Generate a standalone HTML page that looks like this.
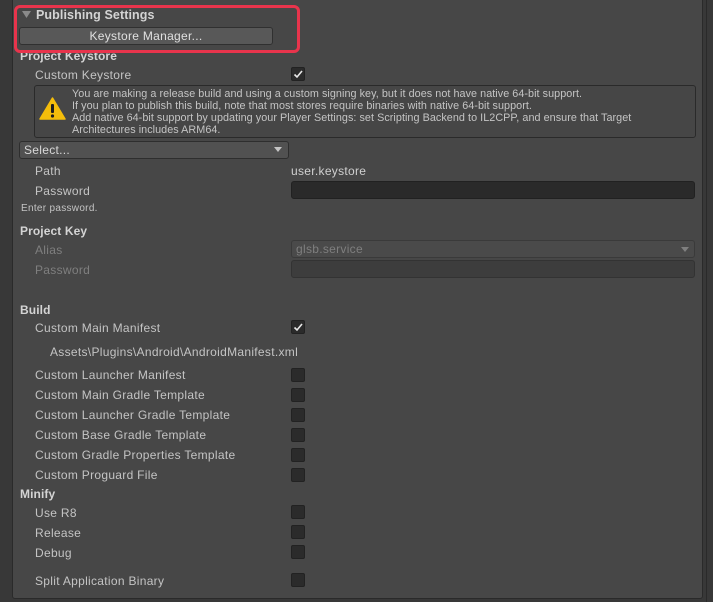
<!DOCTYPE html>
<html><head><meta charset="utf-8"><style>
*{margin:0;padding:0;box-sizing:border-box}
body{width:713px;height:602px;background:#383838;font-family:"Liberation Sans",sans-serif;font-size:12px;color:#c4c4c4;position:relative;overflow:hidden}
.frame{position:absolute;left:12px;top:-4px;width:691px;height:603px;background:#474747;border:1px solid #2a2a2a;border-radius:3px}
.rb{position:absolute;left:706px;top:0;width:1px;height:602px;background:#2a2a2a}
.t{position:absolute;white-space:nowrap;line-height:14px;letter-spacing:0.3px}
.b{font-weight:bold;color:#d4d4d4;letter-spacing:0.1px}
.cb{position:absolute;left:291px;width:14px;height:14px;background:#2b2b2b;border:1px solid #222;border-radius:2px}
.fld{position:absolute;left:291px;width:404px;height:18px;background:#2a2a2a;border:1px solid #212121;border-radius:3px}
.dis{color:#7f7f7f}
</style></head><body>
<div class="frame"></div>
<div class="rb"></div>
<svg style="position:absolute;left:22px;top:10px" width="10" height="9"><path d="M0 1 L9 1 L4.5 8 Z" fill="#8a8a8a"/></svg>
<div class="t b" style="left:36px;top:8px;font-size:12.5px">Publishing Settings</div>
<div style="position:absolute;left:19px;top:27px;width:254px;height:18px;background:#585858;border:1px solid #303030;border-radius:3px;text-align:center;line-height:16px;color:#e0e0e0;letter-spacing:0.3px">Keystore Manager...</div>
<div class="t b" style="left:20px;top:49px">Project Keystore</div>
<div style="position:absolute;left:14px;top:5px;width:286px;height:48px;border:3px solid #e8344c;border-radius:6px"></div>
<div class="t" style="left:35px;top:68px">Custom Keystore</div>
<div class="cb" style="top:67px"><svg width="12" height="12"><path d="M2.5 6.5 L5 9 L10 3" stroke="#e8e8e8" stroke-width="1.6" fill="none"/></svg></div>
<div style="position:absolute;left:34px;top:85px;width:662px;height:53px;border:1px solid #2a2a2a;border-radius:3px;background:#464646"></div>
<svg style="position:absolute;left:39px;top:97px" width="27" height="23"><path d="M13.5 1 L26 22 L1 22 Z" fill="#f4bd0b" stroke="#f4bd0b" stroke-linejoin="round" stroke-width="1.5"/><rect x="12" y="7" width="3" height="9" rx="1" fill="#1e1e1e"/><circle cx="13.5" cy="19" r="1.6" fill="#1e1e1e"/></svg>
<div class="t" style="left:72px;top:88px;font-size:10.8px;line-height:12px;letter-spacing:0.05px">You are making a release build and using a custom signing key, but it does not have native 64-bit support.<br>If you plan to publish this build, note that most stores require binaries with native 64-bit support.<br>Add native 64-bit support by updating your Player Settings: set Scripting Backend to IL2CPP, and ensure that Target<br>Architectures includes ARM64.</div>
<div style="position:absolute;left:19px;top:141px;width:270px;height:18px;background:#515151;border:1px solid #2e2e2e;border-radius:3px;padding-left:4px;line-height:16px;color:#d8d8d8;letter-spacing:0.3px">Select...</div>
<svg style="position:absolute;left:274px;top:147px" width="9" height="6"><path d="M0 0 L8 0 L4 5 Z" fill="#c4c4c4"/></svg>
<div class="t" style="left:35px;top:164px">Path</div>
<div class="t" style="left:291px;top:164px;color:#d0d0d0">user.keystore</div>
<div class="t" style="left:35px;top:184px">Password</div>
<div class="fld" style="top:181px"></div>
<div class="t" style="left:21px;top:202px;font-size:10px">Enter password.</div>
<div class="t b" style="left:20px;top:224px">Project Key</div>
<div class="t dis" style="left:35px;top:243px">Alias</div>
<div style="position:absolute;left:291px;top:240px;width:404px;height:18px;background:#4a4a4a;border:1px solid #3a3a3a;border-radius:3px;padding-left:4px;line-height:16px;color:#7f7f7f;letter-spacing:0.3px">glsb.service</div>
<svg style="position:absolute;left:681px;top:247px" width="9" height="6"><path d="M0 0 L8 0 L4 5 Z" fill="#7f7f7f"/></svg>
<div class="t dis" style="left:35px;top:263px">Password</div>
<div class="fld" style="top:260px;background:#3d3d3d;border-color:#333"></div>
<div class="t b" style="left:20px;top:303px">Build</div>
<div class="t" style="left:35px;top:321px">Custom Main Manifest</div>
<div class="cb" style="top:320px"><svg width="12" height="12"><path d="M2.5 6.5 L5 9 L10 3" stroke="#e8e8e8" stroke-width="1.6" fill="none"/></svg></div>
<div class="t" style="left:50px;top:345px">Assets\Plugins\Android\AndroidManifest.xml</div>
<div class="t" style="left:35px;top:368px">Custom Launcher Manifest</div><div class="cb" style="top:368px"></div>
<div class="t" style="left:35px;top:388px">Custom Main Gradle Template</div><div class="cb" style="top:388px"></div>
<div class="t" style="left:35px;top:408px">Custom Launcher Gradle Template</div><div class="cb" style="top:408px"></div>
<div class="t" style="left:35px;top:428px">Custom Base Gradle Template</div><div class="cb" style="top:428px"></div>
<div class="t" style="left:35px;top:448px">Custom Gradle Properties Template</div><div class="cb" style="top:448px"></div>
<div class="t" style="left:35px;top:468px">Custom Proguard File</div><div class="cb" style="top:468px"></div>
<div class="t b" style="left:20px;top:487px">Minify</div>
<div class="t" style="left:35px;top:506px">Use R8</div><div class="cb" style="top:505px"></div>
<div class="t" style="left:35px;top:526px">Release</div><div class="cb" style="top:525px"></div>
<div class="t" style="left:35px;top:546px">Debug</div><div class="cb" style="top:545px"></div>
<div class="t" style="left:35px;top:574px">Split Application Binary</div><div class="cb" style="top:573px"></div>
</body></html>
